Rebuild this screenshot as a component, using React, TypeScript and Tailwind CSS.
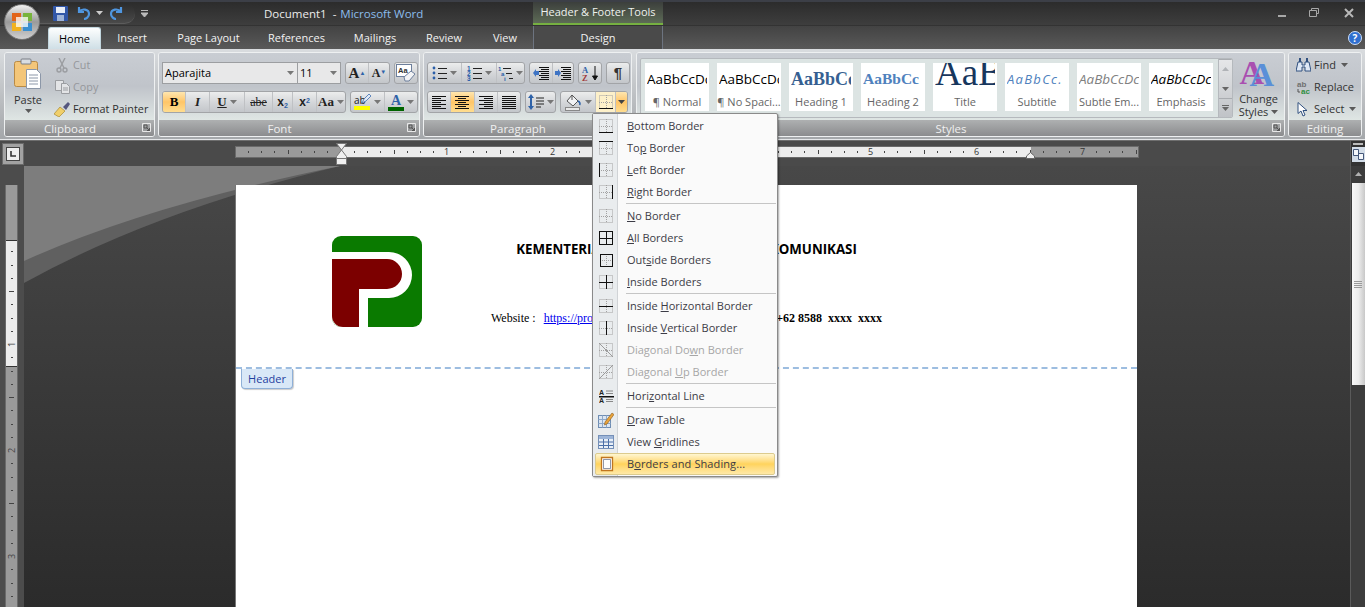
import type { ReactNode } from "react"

const Caret = ({ color = "#5a5a5a" }: { color?: string }) => (
  <svg width="7" height="4" viewBox="0 0 7 4" className="shrink-0">
    <path d="M0 0h7L3.5 4z" fill={color} />
  </svg>
)

const Launcher = () => (
  <svg width="9" height="9" viewBox="0 0 9 9">
    <path d="M.5.5h8v8h-8z" fill="none" stroke="#e8e8e8" />
    <path d="M2 2h3v3H2zM4.5 4.5l3 3M7.5 5v2.5H5" fill="none" stroke="#555" />
  </svg>
)

function Group({ label, w, launcher, children }: { label: string; w: string; launcher?: boolean; children: ReactNode }) {
  return (
    <div className={`${w} h-[85px] flex flex-col shrink-0 rounded-[3px] border border-[#eef0f1] overflow-hidden`}>
      <div className="flex-1 min-h-0 bg-linear-to-b from-[#c9cdd3] via-[#c0c4ca] to-[#dfe6e4]">{children}</div>
      <div
        className={`h-[16px] relative flex items-center justify-center pt-[1px] bg-linear-to-b from-[#aeb0b1] to-[#8b8c8e] text-[11.5px] leading-none text-[#f0f0f0] ${
          launcher ? "pr-[19px]" : ""
        }`}
      >
        {label}
        {launcher && <span className="absolute right-[3px] top-[3px] flex"><Launcher /></span>}
      </div>
    </div>
  )
}

const Seg = ({ children }: { children: ReactNode }) => (
  <div className="flex h-[22px] shrink-0 rounded-[3px] border border-[#a2a4a7] overflow-hidden bg-linear-to-b from-[#eceded] via-[#d5d7da] to-[#c3c6ca]">
    {children}
  </div>
)

function Cell({ w, on, first, children }: { w: string; on?: boolean; first?: boolean; children: ReactNode }) {
  return (
    <div
      className={`${w} h-full flex items-center justify-center gap-[3px] ${first ? "" : "border-l border-[#bfc1c4]"} ${
        on ? "bg-linear-to-b from-[#ffe6ae] via-[#ffc567] to-[#ffdd8f]" : ""
      }`}
    >
      {children}
    </div>
  )
}

const Lines = ({ rows }: { rows: [number, number][] }) => (
  <svg width="15" height="13" viewBox="0 0 15 13">
    {rows.map(([x, l], i) => (
      <rect key={i} x={x} y={i * 2} width={l} height="1" fill="#111" />
    ))}
  </svg>
)

const alignLeft: [number, number][] = [[0, 14], [0, 9], [0, 14], [0, 9], [0, 14], [0, 9], [0, 14]]
const alignCenter: [number, number][] = [[0, 14], [3, 8], [0, 14], [3, 8], [0, 14], [3, 8], [0, 14]]
const alignRight: [number, number][] = [[0, 14], [5, 9], [0, 14], [5, 9], [0, 14], [5, 9], [0, 14]]
const alignFull: [number, number][] = [[0, 14], [0, 14], [0, 14], [0, 14], [0, 14], [0, 14], [0, 14]]

const ListIcon = ({ kind }: { kind: "dot" | "num" | "multi" }) => (
  <svg width="15" height="15" viewBox="0 0 15 15">
    {[2, 7, 12].map((y, i) => (
      <g key={y}>
        {kind === "dot" && <circle cx="2" cy={y} r="1.4" fill="#2a5ea8" />}
        {kind === "num" && (
          <text x="0" y={y + 2.5} fontSize="6.5" fontWeight="700" fill="#2a5ea8" fontFamily="Liberation Sans">{i + 1}</text>
        )}
        {kind === "multi" && (
          <text x={i * 3} y={y + 2.5} fontSize="6" fontWeight="700" fill="#2a5ea8" fontFamily="Liberation Sans">{["1", "a", "i"][i]}</text>
        )}
        <rect x={kind === "multi" ? 5 + i * 3 : 6} y={y} width={kind === "multi" ? 8 - i * 2 : 9} height="1" fill="#222" />
      </g>
    ))}
  </svg>
)

const IndentIcon = ({ flip }: { flip?: boolean }) => (
  <svg width="16" height="14" viewBox="0 0 16 14">
    {[1, 3, 5, 7, 9, 11, 13].map((y) => (
      <rect key={y} x={y % 4 === 1 ? 6 : 8} y={y} width={y % 4 === 1 ? 10 : 8} height="1" fill="#111" />
    ))}
    <path d={flip ? "M0 5h3V3l3 4-3 4V9H0z" : "M6 5H3V3L0 7l3 4V9h3z"} fill="#3f74c4" />
  </svg>
)

const BorderIcon = ({ solid, dim, size = 14 }: { solid: string; dim?: boolean; size?: number }) => {
  const c = dim ? "#9a9a9a" : "#111"
  const s = size - 0.5
  const m = Math.floor(size / 2) + 0.5
  return (
    <svg width={size} height={size} viewBox={`0 0 ${size} ${size}`}>
      <g stroke="#a2a2a2" strokeWidth="1" strokeDasharray="1 1" fill="none">
        <path d={`M.5.5H${s}V${s}H.5zM${m} 0V${size}M0 ${m}H${size}`} />
      </g>
      <g stroke={c} strokeWidth="1" fill="none">
        {solid.includes("b") && <path d={`M0 ${s}H${size}`} />}
        {solid.includes("t") && <path d={`M0 .5H${size}`} />}
        {solid.includes("l") && <path d={`M.5 0V${size}`} />}
        {solid.includes("r") && <path d={`M${s} 0V${size}`} />}
        {solid.includes("h") && <path d={`M0 ${m}H${size}`} />}
        {solid.includes("v") && <path d={`M${m} 0V${size}`} />}
        {solid.includes("d") && <path d={`M0 0L${size} ${size}`} />}
        {solid.includes("u") && <path d={`M0 ${size}L${size} 0`} />}
      </g>
    </svg>
  )
}

const PasteIcon = () => (
  <svg width="28" height="32" viewBox="0 0 28 32">
    <rect x=".5" y="3.5" width="23" height="25" rx="2" fill="#f4c679" stroke="#b98a45" />
    <rect x="7" y="1" width="10" height="5" rx="1" fill="#d9dde2" stroke="#7b7f86" />
    <path d="M12.5 11.5h10l4 4v15h-14z" fill="#fff" stroke="#8c97a8" />
    <path d="M15 17h9M15 20h9M15 23h9M15 26h9" stroke="#8c97a8" />
  </svg>
)

const ScissorsIcon = () => (
  <svg width="14" height="15" viewBox="0 0 14 15" fill="none" stroke="#9b9da1" strokeWidth="1.4">
    <path d="M4 0l5 10M10 0L5 10" />
    <circle cx="4" cy="12" r="2" />
    <circle cx="10" cy="12" r="2" />
  </svg>
)

const CopyIcon = () => (
  <svg width="15" height="14" viewBox="0 0 15 14" fill="#e3e4e6" stroke="#9b9da1">
    <path d="M.5.5h8v10h-8z" />
    <path d="M6.5 3.5h5l3 3v7h-8z" />
    <path d="M8 8h5M8 10h5" />
  </svg>
)

const BrushIcon = () => (
  <svg width="16" height="15" viewBox="0 0 16 15">
    <path d="M0 12l6-7 5 4-6 6z" fill="#f0cf6a" stroke="#a98a2f" strokeWidth=".7" />
    <path d="M9 5l5-5 2 2-4 6z" fill="#55577e" />
  </svg>
)

const ClearIcon = () => (
  <svg width="20" height="18" viewBox="0 0 20 18">
    <rect x=".5" y=".5" width="15" height="12" fill="#fff" stroke="#6d7f9c" />
    <text x="2" y="9" fontSize="7.5" fontWeight="700" fill="#333" fontFamily="Liberation Sans">Aa</text>
    <path d="M8 13l7-6 4 3-6 7H9z" fill="#f2f3f5" stroke="#6d7f9c" />
  </svg>
)

const MenuIcon = ({ name }: { name: string }) => {
  if (name === "hline")
    return (
      <svg width="15" height="14" viewBox="0 0 15 14">
        <text x="0" y="6" fontSize="7" fontWeight="700" fill="#222" fontFamily="Liberation Sans">A</text>
        <text x="0" y="14" fontSize="7" fontWeight="700" fill="#222" fontFamily="Liberation Sans">A</text>
        <path d="M7 2h7M7 4.5h7M7 10.500h7M7 12.500h7" stroke="#888" />
        <rect y="7" width="15" height="1.500" fill="#111" />
      </svg>
    )
  if (name === "draw")
    return (
      <svg width="16" height="16" viewBox="0 0 16 16">
        <rect x=".5" y="3.500" width="12" height="12" fill="#dbe6f2" stroke="#6f8db3" />
        <path d="M.5 7.500h12M.5 11.500h12M4.500 3.500v12M8.500 3.500v12" stroke="#8fa8c8" />
        <path d="M7 10l7-9 2 1.500L9 12l-2.500 1z" fill="#e9a33b" stroke="#8a5a1a" strokeWidth=".6" />
      </svg>
    )
  if (name === "grid")
    return (
      <svg width="16" height="14" viewBox="0 0 16 14">
        <rect x=".5" y=".5" width="15" height="13" fill="#e8eff7" stroke="#7590b8" />
        <rect x="1" y="1" width="14" height="3" fill="#9db5d8" />
        <path d="M5.500 4v9M10.500 4v9M1 7h14M1 10.500h14" stroke="#4a6fa8" />
      </svg>
    )
  if (name === "shade")
    return (
      <svg width="15" height="16" viewBox="0 0 15 16">
        <path d="M1.500 1.500h11v13h-11z" fill="#fff" stroke="#c0761f" strokeWidth="1.300" />
        <path d="M3.500 3.500h7v9h-7z" fill="#fdfdfd" stroke="#44536e" strokeWidth=".6" />
      </svg>
    )
  return <BorderIcon solid={name} dim={name === "d" || name === "u"} size={name === "lrtb" ? 13 : 14} />
}

type Item = { pre: string; key: string; post: string; icon: string; off?: boolean; hot?: boolean } | "sep"

const borderItems: Item[] = [
  { pre: "", key: "B", post: "ottom Border", icon: "b" },
  { pre: "To", key: "p", post: " Border", icon: "t" },
  { pre: "", key: "L", post: "eft Border", icon: "l" },
  { pre: "", key: "R", post: "ight Border", icon: "r" },
  "sep",
  { pre: "", key: "N", post: "o Border", icon: "none" },
  { pre: "", key: "A", post: "ll Borders", icon: "lrtbhv" },
  { pre: "Out", key: "s", post: "ide Borders", icon: "lrtb" },
  { pre: "", key: "I", post: "nside Borders", icon: "hv" },
  "sep",
  { pre: "Inside ", key: "H", post: "orizontal Border", icon: "h" },
  { pre: "Inside ", key: "V", post: "ertical Border", icon: "v" },
  { pre: "Diagonal Do", key: "w", post: "n Border", icon: "d", off: true },
  { pre: "Diagonal ", key: "U", post: "p Border", icon: "u", off: true },
  "sep",
  { pre: "Hori", key: "z", post: "ontal Line", icon: "hline" },
  "sep",
  { pre: "", key: "D", post: "raw Table", icon: "draw" },
  { pre: "View ", key: "G", post: "ridlines", icon: "grid" },
  { pre: "B", key: "o", post: "rders and Shading...", icon: "shade", hot: true },
]

function BorderMenu() {
  return (
    <div className="absolute left-[592px] top-[113px] w-[186px] h-[364px] z-20 rounded-[2px] border border-[#8a8a8a] bg-[#fafafa] shadow-[1px_1px_2px_rgba(0,0,0,0.35)] py-[1px] text-[11px] text-[#3c3c46]">
      <div className="absolute left-0 top-0 bottom-0 w-[25px] bg-[#e9ecee] border-r border-[#d0d3d6]" />
      {borderItems.map((it, i) =>
        it === "sep" ? (
          <div key={i} className="relative h-[2px] ml-[33px] mr-[1px] border-t border-[#c5c5c5]" />
        ) : (
          <div
            key={i}
            className={`relative h-[22px] flex items-center ${
              it.hot ? "mx-[2px] rounded-[2px] border border-[#dccb8e] bg-linear-to-b from-[#fff6d0] via-[#ffd35c] to-[#ffe9a6]" : ""
            } ${it.off ? "text-[#a6a6a6]" : ""}`}
          >
            <span className={`${it.hot ? "w-[23px]" : "w-[26px]"} flex justify-center shrink-0`}>
              <MenuIcon name={it.icon} />
            </span>
            <span className={it.hot ? "ml-[8px] tracking-[0.1px]" : "ml-[8px]"}>
              {it.pre}
              <u>{it.key}</u>
              {it.post}
            </span>
          </div>
        ),
      )}
    </div>
  )
}

const styleTiles = [
  { label: "¶ Normal", cls: "text-[13.5px] text-black", text: "AaBbCcDc" },
  { label: "¶ No Spaci...", cls: "text-[13.5px] text-black", text: "AaBbCcDc" },
  { label: "Heading 1", cls: "text-[18px] font-bold text-[#365f91] font-['Liberation_Serif',serif]", text: "AaBbCc" },
  { label: "Heading 2", cls: "text-[15.5px] font-bold text-[#4f81bd] font-['Liberation_Serif',serif]", text: "AaBbCc" },
  { label: "Title", cls: "relative -top-[6px] text-[37px] text-[#17365d] font-['Liberation_Serif',serif]", text: "AaB" },
  { label: "Subtitle", cls: "text-[13px] italic text-[#4f81bd] tracking-[1.300px]", text: "AaBbCc." },
  { label: "Subtle Em...", cls: "text-[13.5px] italic text-[#808080]", text: "AaBbCcDc" },
  { label: "Emphasis", cls: "text-[13.5px] italic text-black", text: "AaBbCcDc" },
]

function Ribbon() {
  return (
    <div className="h-[91px] flex gap-[3px] pl-[4px] pt-[3px] border-b border-[#e4e6e8] bg-linear-to-b from-[#d9dcdf] to-[#a4a7aa] shrink-0">
      <Group label="Clipboard" w="w-[151px]" launcher>
        <div className="flex h-full pl-[3px] pt-[5px]">
          <div className="w-[46px] flex flex-col items-center text-[#333] text-[11px] pr-[6px]">
            <PasteIcon />
            <span className="mt-[3px] leading-[14px]">Paste</span>
            <span className="mt-[2px]"><Caret /></span>
          </div>
          <div className="-mt-[4px] flex flex-col text-[10.8px]">
            {[
              { t: "Cut", i: <ScissorsIcon />, off: true },
              { t: "Copy", i: <CopyIcon />, off: true },
              { t: "Format Painter", i: <BrushIcon />, off: false },
            ].map((r) => (
              <div key={r.t} className={`h-[22px] shrink-0 flex items-center gap-[3px] ${r.off ? "text-[#95979b]" : "text-[#2f2f2f]"}`}>
                <span className="w-[16px] flex justify-center">{r.i}</span>
                {r.t}
              </div>
            ))}
          </div>
        </div>
      </Group>

      <Group label="Font" w="w-[262px]" launcher>
        <div className="pl-[3px] pt-[9px] flex flex-col gap-[7px]">
          <div className="flex items-center">
            <div className="w-[136px] h-[22px] border border-[#9c9ea1] bg-[#e8e8e9] flex items-center justify-between pl-[2px] pr-[3px] text-[11px] text-black">
              Aparajita
              <Caret color="#777" />
            </div>
            <div className="w-[44px] h-[22px] -ml-[1px] border border-[#9c9ea1] bg-[#e8e8e9] flex items-center justify-between px-[2px] pr-[3px] text-[11px] text-black">
              11
              <Caret color="#777" />
            </div>
            <div className="ml-[4px]">
              <Seg>
                <Cell w="w-[22px]" first>
                  <span className="font-['Liberation_Serif',serif] font-bold text-[15px] text-[#222]">A<sup className="text-[#2e62a8] text-[6px]">▲</sup></span>
                </Cell>
                <Cell w="w-[21px]">
                  <span className="font-['Liberation_Serif',serif] font-bold text-[12px] text-[#222]">A<sup className="text-[#2e62a8] text-[6px]">▼</sup></span>
                </Cell>
              </Seg>
            </div>
            <div className="ml-[4px]">
              <Seg>
                <Cell w="w-[22px]" first><ClearIcon /></Cell>
              </Seg>
            </div>
          </div>
          <div className="flex items-center">
            <Seg>
              <Cell w="w-[22px]" on first><span className="font-['Liberation_Serif',serif] font-bold text-[13px] text-black">B</span></Cell>
              <Cell w="w-[24px]"><span className="font-['Liberation_Serif',serif] italic font-bold text-[13px] text-[#222]">I</span></Cell>
              <Cell w="w-[35px]"><span className="font-['Liberation_Serif',serif] underline font-bold text-[13px] text-[#222]">U</span><Caret color="#777" /></Cell>
              <Cell w="w-[28px]"><span className="font-['Liberation_Serif',serif] line-through text-[12px] text-[#222]">abe</span></Cell>
              <Cell w="w-[20px]"><span className="font-['Liberation_Sans',sans-serif] font-bold text-[12px] text-[#222]">x<sub className="text-[7px] text-[#2e62a8]">2</sub></span></Cell>
              <Cell w="w-[24px]"><span className="font-['Liberation_Sans',sans-serif] font-bold text-[12px] text-[#222]">x<sup className="text-[7px] text-[#2e62a8]">2</sup></span></Cell>
              <Cell w="w-[29px]"><span className="font-['Liberation_Serif',serif] font-bold text-[13px] text-[#222]">Aa</span><Caret color="#777" /></Cell>
            </Seg>
            <div className="ml-[4px]">
              <Seg>
                <Cell w="w-[33px]" first>
                  <span className="relative flex flex-col items-start text-[10px] leading-[12px] text-[#222] w-[17px]">
                    ab
                    <span className="w-[16px] h-[4px] bg-[#ffff00]" />
                    <svg width="9" height="10" viewBox="0 0 9 10" className="absolute right-0 top-0">
                      <path d="M0 9l2-4 5-5 2 2-5 5z" fill="#dfe8f5" stroke="#3f6fb0" strokeWidth=".8" />
                    </svg>
                  </span>
                  <Caret color="#777" />
                </Cell>
                <Cell w="w-[33px]">
                  <span className="flex flex-col items-center font-['Liberation_Serif',serif] font-bold text-[14px] leading-[13px] text-[#2e62a8]">
                    A
                    <span className="w-[16px] h-[4px] bg-[#006400]" />
                  </span>
                  <Caret color="#777" />
                </Cell>
              </Seg>
            </div>
          </div>
        </div>
      </Group>

      <Group label="Paragraph" w="w-[209px]" launcher>
        <div className="pl-[3px] pt-[9px] flex flex-col gap-[7px]">
          <div className="flex gap-[4px]">
            <Seg>
              <Cell w="w-[33px]" first><ListIcon kind="dot" /><Caret color="#777" /></Cell>
              <Cell w="w-[35px]"><ListIcon kind="num" /><Caret color="#777" /></Cell>
              <Cell w="w-[28px]"><ListIcon kind="multi" /><Caret color="#777" /></Cell>
            </Seg>
            <Seg>
              <Cell w="w-[22px]" first><IndentIcon /></Cell>
              <Cell w="w-[21px]"><IndentIcon flip /></Cell>
            </Seg>
            <Seg>
              <Cell w="w-[22px]" first>
                <svg width="18" height="17" viewBox="0 0 18 17">
                  <text x="1" y="8" fontSize="8.500" fontWeight="700" fill="#2e62a8" fontFamily="Liberation Serif">A</text>
                  <text x="1" y="16" fontSize="8.500" fontWeight="700" fill="#a03a3a" fontFamily="Liberation Serif">Z</text>
                  <path d="M14 1v12M11.500 11l2.500 4 2.500-4z" stroke="#111" fill="#111" />
                </svg>
              </Cell>
            </Seg>
            <Seg>
              <Cell w="w-[22px]" first><span className="font-['Liberation_Sans',sans-serif] font-bold text-[15px] text-[#333]">¶</span></Cell>
            </Seg>
          </div>
          <div className="flex gap-[4px]">
            <Seg>
              <Cell w="w-[22px]" first><Lines rows={alignLeft} /></Cell>
              <Cell w="w-[24px]" on><Lines rows={alignCenter} /></Cell>
              <Cell w="w-[23px]"><Lines rows={alignRight} /></Cell>
              <Cell w="w-[23px]"><Lines rows={alignFull} /></Cell>
            </Seg>
            <Seg>
              <Cell w="w-[29px]" first>
                <svg width="16" height="16" viewBox="0 0 16 16">
                  <path d="M3 0l3 4H4v8h2l-3 4-3-4h2V4H0z" fill="#2e62a8" />
                  <path d="M8 4h8M8 7h8M8 10h8M8 13h5" stroke="#222" />
                </svg>
                <Caret color="#777" />
              </Cell>
            </Seg>
            <Seg>
              <Cell w="w-[34px]" first>
                <svg width="17" height="17" viewBox="0 0 17 17">
                  <path d="M7 1l6 6-5 5-6-5z" fill="#f2f3f5" stroke="#555" />
                  <path d="M13 7c2 1 2.500 3 1.500 4" stroke="#2e62a8" strokeWidth="1.600" fill="none" />
                  <path d="M7 1v5" stroke="#555" />
                  <rect x=".5" y="13.500" width="14" height="3" fill="#e8e8e8" stroke="#888" />
                </svg>
                <Caret color="#777" />
              </Cell>
              <Cell w="w-[20px]">
                <span className="w-full h-full flex items-center justify-center bg-[#fdf0c9]"><BorderIcon solid="b" /></span>
              </Cell>
              <Cell w="w-[12px]" on><Caret color="#444" /></Cell>
            </Seg>
          </div>
        </div>
      </Group>

      <div className="w-[1px] -ml-[3px]" />

      <Group label="Styles" w="w-[649px]" launcher>
        <div className="flex h-full pl-[3px] pt-[5px]">
          <div className="w-[593px] h-[60px] flex rounded-[2px] border border-[#b5b9bd] bg-[#dce4e3] overflow-hidden">
            <div className="flex-1 flex gap-[8px] pl-[4px] pt-[4px]">
              {styleTiles.map((t) => (
                <div key={t.label} className="w-[64px] h-[48px] bg-white flex flex-col items-center overflow-hidden">
                  <div className="w-[60px] h-[31px] overflow-hidden flex items-center whitespace-nowrap leading-[30px]">
                    <span className={t.cls}>{t.text}</span>
                  </div>
                  <span className="text-[11px] leading-[16px] text-[#666] whitespace-nowrap">{t.label}</span>
                </div>
              ))}
            </div>
            <div className="w-[14px] flex flex-col border-l border-[#b5b9bd] bg-linear-to-b from-[#e6e7e9] to-[#c0c3c7]">
              <div className="h-[20px] flex items-center justify-center border-b border-[#a9acb0] rotate-180"><Caret color="#b0b3b7" /></div>
              <div className="h-[20px] flex items-center justify-center border-b border-[#a9acb0]"><Caret color="#666" /></div>
              <div className="flex-1 flex flex-col gap-[1px] items-center justify-center">
                <span className="w-[7px] h-[1px] bg-[#666]" />
                <Caret color="#666" />
              </div>
            </div>
          </div>
          <div className="flex-1 flex flex-col items-center text-[11px] leading-[13px] text-[#333]">
            <div className="relative w-[34px] h-[29px] font-['Liberation_Serif',serif] font-bold text-[34px] leading-[28px] mt-[1px]">
              <span className="absolute -left-[2px] top-0 text-[#a94fb0]">A</span>
              <span className="absolute left-[8px] top-[2px] text-[#5a8fd8]">A</span>
            </div>
            <span className="mt-[4px]">Change</span>
            <span className="flex items-center gap-[3px]">Styles <Caret /></span>
          </div>
        </div>
      </Group>

      <Group label="Editing" w="w-[74px]">
        <div className="pt-[1px] pl-[6px] flex flex-col text-[11px] text-[#333]">
          {[
            {
              t: "Find",
              i: (
                <svg width="15" height="14" viewBox="0 0 15 14">
                  <path d="M2 4h4v3h3V4h4l2 9H9V9H6v4H0z" fill="#dfe8f5" stroke="#30507f" />
                  <path d="M3 0h2v4H3zM10 0h2v4h-2z" fill="#30507f" />
                </svg>
              ),
            },
            {
              t: "Replace",
              i: (
                <svg width="15" height="15" viewBox="0 0 15 15">
                  <text x="1" y="7" fontSize="8" fontWeight="700" fill="#6f6f6f" fontFamily="Liberation Sans">ab</text>
                  <text x="5" y="14" fontSize="8" fontWeight="700" fill="#2f8f3f" fontFamily="Liberation Sans">ac</text>
                  <path d="M2 9v3h2" stroke="#555" fill="none" />
                </svg>
              ),
            },
            {
              t: "Select",
              i: (
                <svg width="12" height="15" viewBox="0 0 12 15">
                  <path d="M1 .5v11l3-2.500 2 5 2-1-2-4.500h4z" fill="#fff" stroke="#30507f" />
                </svg>
              ),
            },
          ].map((r, i) => (
            <div key={r.t} className="h-[22px] flex items-center gap-[3px]">
              <span className="w-[16px] flex justify-center">{r.i}</span>
              {r.t}
              {i !== 1 && <span className="ml-[2px]"><Caret /></span>}
            </div>
          ))}
        </div>
      </Group>
    </div>
  )
}

const tabs = [
  { t: "Insert", w: "w-[62px]" },
  { t: "Page Layout", w: "w-[91px]" },
  { t: "References", w: "w-[85px]" },
  { t: "Mailings", w: "w-[72px]" },
  { t: "Review", w: "w-[66px]" },
  { t: "View", w: "w-[56px]" },
]

const hMarks = Array.from({ length: 68 }, (_, i) => i - 7)
const vMarks = Array.from({ length: 31 }, (_, i) => i + 1)

function HRuler() {
  return (
    <div className="relative w-[904px] h-[12px] flex border border-[#6a6a6a] bg-[#9a9a9a]">
      <div className="ml-[105px] w-[690px] h-full bg-[#ececec]" />
      {hMarks.map((n) => {
        const left = 104.5 + n * 13.25
        if (n > 0 && n % 8 === 0)
          return (
            <span key={n} className="absolute top-0 h-full -translate-x-1/2 text-[9px] leading-[10px] text-[#333]" style={{ left }}>
              {n / 8}
            </span>
          )
        if (n === 0) return null
        return (
          <span
            key={n}
            className={`absolute w-[1px] bg-[#444] ${n % 4 === 0 ? "top-[3px] h-[4px]" : "top-[4px] h-[2px]"}`}
            style={{ left }}
          />
        )
      })}
      <svg width="11" height="22" viewBox="0 0 11 22" className="absolute left-[100px] -top-[4px]">
        <path d="M.5.5h10L5.500 7l5 6.500v8H.5v-8L5.500 7z" fill="#f0f0f0" stroke="#777" />
        <path d="M.5 15.500h10" stroke="#777" />
      </svg>
      <svg width="9" height="7" viewBox="0 0 9 7" className="absolute left-[790px] top-[5px]">
        <path d="M.5 6.500V4l4-3.500 4 3.500v2.500z" fill="#f0f0f0" stroke="#666" />
      </svg>
    </div>
  )
}

function VRuler() {
  return (
    <div className="relative w-[13px] h-[430px] flex flex-col bg-[#9a9a9a] border-x border-[#6a6a6a]">
      <div className="mt-[55px] h-[127px] bg-[#ececec] border-y border-[#333]" />
      {vMarks.map((n) => {
        const top = 53 + n * 13.25
        if (n % 8 === 0)
          return (
            <span key={n} className="absolute left-0 w-full text-center text-[9px] leading-[9px] -rotate-90 text-[#444]" style={{ top: top - 4 }}>
              {n / 8}
            </span>
          )
        return (
          <span
            key={n}
            className={`absolute h-[1px] bg-[#444] ${n % 4 === 0 ? "left-[3px] w-[5px]" : "left-[5px] w-[2px]"}`}
            style={{ top }}
          />
        )
      })}
    </div>
  )
}

const Logo = () => (
  <svg width="90" height="91" viewBox="0 0 90 91" className="shrink-0">
    <rect width="90" height="91" rx="9" fill="#0a7a00" />
    <path d="M0 16H57A23 23 0 0 1 57 62H36V91H9A9 9 0 0 1 0 82Z" fill="#fff" />
    <path d="M0 23H55A15 15 0 0 1 55 53H27V91H11A11 11 0 0 1 0 80Z" fill="#7c0000" />
  </svg>
)

export default function App() {
  return (
    <div className="relative w-[1365px] h-[607px] overflow-hidden flex flex-col bg-[#444] font-['Open_Sans',sans-serif] text-[11px] text-white">
      {/* title bar */}
      <div className="h-[25px] flex shrink-0 border-t-[2px] border-[#3c3f47] bg-linear-to-b from-[#2c2c2c] to-[#3e3e3e]">
        <div className="w-[533px] flex items-center">
          <div className="ml-[38px] w-[97px] h-[21px] flex items-center rounded-r-[11px] bg-linear-to-b from-[#2b2b2b] to-[#4a4a4a] border-b border-[#5c5c5c]">
            <svg width="15" height="15" viewBox="0 0 15 15" className="ml-[15px]">
              <rect width="15" height="15" rx="1" fill="#3257a8" />
              <rect x="3" y="1" width="9" height="6" fill="#e8eef8" />
              <rect x="4" y="9" width="7" height="6" fill="#9fb4d8" />
            </svg>
            <svg width="14" height="14" viewBox="0 0 14 14" className="ml-[9px]" fill="none" stroke="#4f96e0" strokeWidth="2.200">
              <path d="M2 1v5h5M2 6c3-4 10-3 10 2 0 3-3 5-5 5" />
            </svg>
            <span className="ml-[5px]"><Caret color="#ccc" /></span>
            <svg width="14" height="14" viewBox="0 0 14 14" className="ml-[6px]" fill="none" stroke="#4f96e0" strokeWidth="2.200">
              <path d="M12 1v5H7M12 6C9 2 2 3 2 8c0 3 3 5 5 5" />
            </svg>
          </div>
          <svg width="7" height="8" viewBox="0 0 7 8" className="ml-[6px]">
            <path d="M0 .5h7M0 3h7L3.500 7z" stroke="#bbb" fill="#bbb" />
          </svg>
          <span className="ml-[116px] text-[11.5px] text-[#ececec] whitespace-nowrap">
            Document1 &nbsp;-&nbsp;<span className="ml-[1px] text-[#8cbdec]">Microsoft Word</span>
          </span>
        </div>
        <div className="w-[130px] flex items-center justify-center border-b-[2px] border-[#76b041] bg-linear-to-b from-[#3c3f3c] to-[#5d6b56] text-[11px] text-[#eef2ee]">
          Header &amp; Footer Tools
        </div>
        <div className="flex-1" />
        <div className="flex items-center pr-[11px] pb-[2px]">
          <span className="w-[8px] h-[2px] mt-[6px] bg-[#a8a8a8]" />
          <svg width="10" height="9" viewBox="0 0 10 9" fill="none" stroke="#a8a8a8" className="ml-[23px]">
            <path d="M.5 2.500h7v6h-7zM2.500 2.500v-2h7v5h-2" />
          </svg>
          <svg width="10" height="10" viewBox="0 0 10 10" className="ml-[25px]" stroke="#b8b8b8" strokeWidth="2">
            <path d="M1 1l8 8M9 1L1 9" />
          </svg>
        </div>
      </div>

      {/* tabs */}
      <div className="h-[24px] flex shrink-0 items-end pl-[48px] bg-linear-to-b from-[#434343] to-[#595959] border-t border-[#333]">
        <div className="w-[53px] h-[22px] pt-[1px] flex items-center justify-center rounded-t-[3px] border border-b-0 border-[#c2d6de] bg-linear-to-b from-[#fdfefe] to-[#cfdfe6] text-black">
          Home
        </div>
        {tabs.map((t) => (
          <div key={t.t} className={`${t.w} h-full pt-[2px] flex items-center justify-center text-[#f2f2f2]`}>
            {t.t}
          </div>
        ))}
        <div className="w-[130px] h-full pt-[2px] flex items-center justify-center border-x border-[#6d7480] text-[#f2f2f2] bg-[#4a4a4a]">Design</div>
        <div className="flex-1 h-full flex items-center justify-end pr-[3px]">
          <span className="w-[14px] h-[14px] rounded-full bg-[#2f6fd0] border border-[#cfe0f8] flex items-center justify-center text-[10px] font-bold leading-none text-white">?</span>
        </div>
      </div>

      <Ribbon />

      {/* ruler row */}
      <div className="h-[26px] flex items-start shrink-0 bg-[#4a4a4a] border-t border-[#6e6e6e]">
        <div className="ml-[2px] mt-[2px] w-[22px] h-[22px] flex items-center justify-center bg-[#a2a2a2] border border-[#6a6a6a]">
          <span className="w-[14px] h-[14px] flex items-center justify-center bg-[#eeeeee] border border-[#444]">
            <svg width="6" height="6" viewBox="0 0 6 6"><path d="M1 0v5h5" fill="none" stroke="#333" strokeWidth="1.600" /></svg>
          </span>
        </div>
        <div className="ml-[211px] mt-[5px]"><HRuler /></div>
        <div className="ml-auto w-[15px] h-full border-l border-[#5a5a5a] bg-[#333] flex flex-col items-center pt-[1px]">
          <span className="w-[10px] h-[2px] bg-[#bbb] mt-[1px]" />
          <span className="mt-[2px] w-[13px] h-[15px] bg-[#d3dde8] flex items-center justify-center">
            <svg width="11" height="11" viewBox="0 0 11 11" fill="#f5f8fb" stroke="#45587a">
              <path d="M.5.5h5v6h-5zM5.500 4.500h5v6h-5z" />
            </svg>
          </span>
        </div>
      </div>

      {/* document area */}
      <div className="flex-1 min-h-0 flex">
        <div className="w-[24px] shrink-0 bg-[#4c4c4c] pl-[5px] pt-[19px]"><VRuler /></div>
        <div className="relative flex-1 min-w-0 bg-linear-to-b from-[#484848] to-[#2b2b2b]">
          <svg width="322" height="120" viewBox="0 0 322 120" className="absolute left-0 top-0">
            <path d="M0 0H316Q130 45 0 117Z" fill="#606060" />
            <path d="M0 0H316Q120 40 0 95Z" fill="#7d7d7d" />
          </svg>
          <div className="relative ml-[211px] mt-[19px] w-[902px] h-[500px] bg-white border-l border-[#777] text-black">
            <div className="h-[184px] flex pl-[96px] pr-[186px] pt-[51px] border-b-[2px] border-dashed border-[#9dbde0]">
              <Logo />
              <div className="flex-1 flex flex-col items-center">
                <div className="mt-[5px] text-[13.3px] font-bold leading-[16px] whitespace-nowrap">KEMENTERIAN RISET, INFORMASI DAN KOMUNIKASI</div>
                <div className="mt-[54px] w-[391px] flex justify-between font-['Liberation_Serif',serif] text-[12px] leading-[14px] whitespace-nowrap">
                  <span>
                    Website : <span className="ml-[5px] text-[#0000ee] underline">https://profil.example.id</span>
                  </span>
                  <span className="font-bold">+62 8588&nbsp; xxxx&nbsp; xxxx</span>
                </div>
              </div>
            </div>
            <div className="ml-[5px] w-[52px] h-[20px] pt-[1px] flex items-center justify-center rounded-b-[4px] border border-t-0 border-[#8fb0d8] bg-[#d9e8f7] shadow-[1px_1px_1px_rgba(0,0,0,0.2)] text-[11px] text-[#1f3f9f]">
              Header
            </div>
          </div>
        </div>
        <div className="w-[15px] shrink-0 border-l border-[#5a5a5a] bg-[#3c3c3c] flex flex-col items-center">
          <div className="h-[17px] w-[13px] flex items-center justify-center rotate-180"><Caret color="#b0b0b0" /></div>
          <div className="w-[13px] h-[202px] flex flex-col gap-[1px] items-center justify-center bg-linear-to-r from-[#f8f8f8] via-[#ececec] to-[#c8c8c8]">
            {[0, 1, 2, 3].map((g) => (
              <span key={g} className="w-[8px] h-[1px] bg-[#9a9a9a]" />
            ))}
          </div>
        </div>
      </div>

      {/* office button */}
      <div className="absolute left-[4px] top-[4px] w-[36px] h-[36px] rounded-full z-10 flex items-center justify-center border border-[#777] bg-linear-to-b from-[#f2f2f2] via-[#9a9a9a] to-[#d0d0d0]">
        <svg width="24" height="24" viewBox="0 0 24 24">
          <path d="M2 3h9v8H2z" fill="#e2641a" />
          <path d="M13 3h9v8h-9z" fill="#78b43c" />
          <path d="M2 13h9v8H2z" fill="#f2b21e" />
          <path d="M13 13h9v8h-9z" fill="#3a8fd0" />
          <path d="M6 7h12v10H6z" fill="#fff" opacity=".75" />
        </svg>
      </div>

      <BorderMenu />
    </div>
  )
}
